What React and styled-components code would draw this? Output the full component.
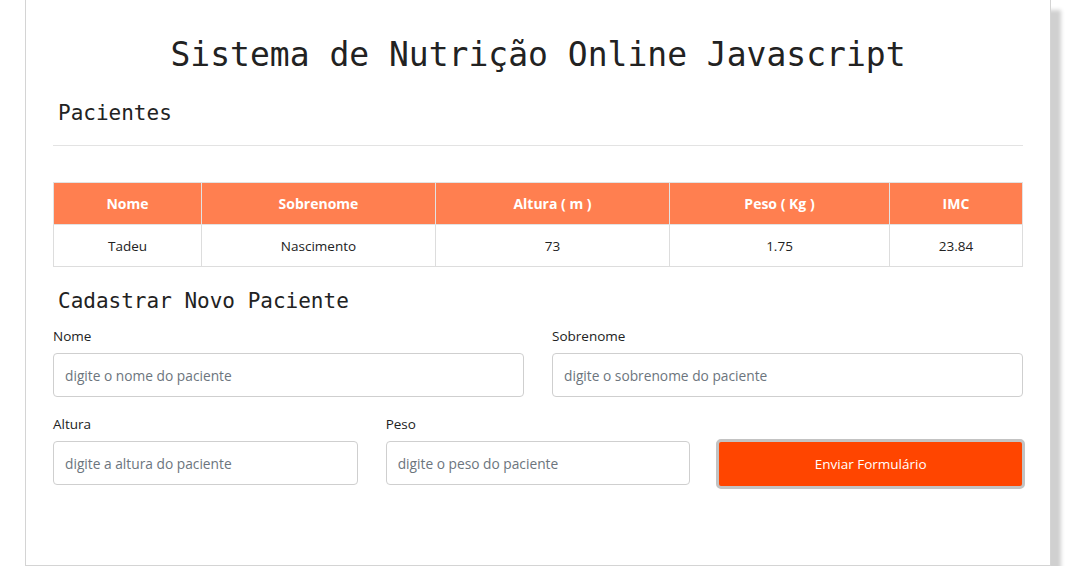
import React from 'react'
import styled, { createGlobalStyle } from 'styled-components'

const GlobalStyle = createGlobalStyle`
  body {
    margin: 0;
    background: #ffffff;
    font-family: "Open Sans", "Noto Sans", sans-serif;
  }
  * { box-sizing: border-box; }
`

const patients = [
  { nome: 'Tadeu', sobrenome: 'Nascimento', altura: '73', peso: '1.75', imc: '23.84' },
]

const columns = [
  { label: 'Nome', width: 148 },
  { label: 'Sobrenome', width: 234 },
  { label: 'Altura ( m )', width: 234 },
  { label: 'Peso ( Kg )', width: 220 },
  { label: 'IMC', width: 133 },
]

const App = () => {
  return (
    <>
      <GlobalStyle />
      <Card>
        <Title>Sistema de Nutrição Online Javascript</Title>
        <SectionTitle>Pacientes</SectionTitle>
        <Divider />
        <Table>
          <colgroup>
            {columns.map((c) => (
              <col key={c.label} width={c.width} />
            ))}
          </colgroup>
          <thead>
            <tr>
              {columns.map((c) => (
                <Th key={c.label}>{c.label}</Th>
              ))}
            </tr>
          </thead>
          <tbody>
            {patients.map((p) => (
              <tr key={p.nome}>
                <Td>{p.nome}</Td>
                <Td>{p.sobrenome}</Td>
                <Td>{p.altura}</Td>
                <Td>{p.peso}</Td>
                <Td>{p.imc}</Td>
              </tr>
            ))}
          </tbody>
        </Table>

        <SectionTitle form>Cadastrar Novo Paciente</SectionTitle>
        <Form onSubmit={(e) => e.preventDefault()}>
          <FormRow cols={2}>
            <Field>
              <Label>Nome</Label>
              <Input type="text" placeholder="digite o nome do paciente" />
            </Field>
            <Field>
              <Label>Sobrenome</Label>
              <Input type="text" placeholder="digite o sobrenome do paciente" />
            </Field>
          </FormRow>
          <FormRow cols={3}>
            <Field>
              <Label>Altura</Label>
              <Input type="text" placeholder="digite a altura do paciente" />
            </Field>
            <Field>
              <Label>Peso</Label>
              <Input type="text" placeholder="digite o peso do paciente" />
            </Field>
            <SubmitButton type="submit">Enviar Formulário</SubmitButton>
          </FormRow>
        </Form>
      </Card>
    </>
  )
}

const Card = styled.div`
  width: 1026px;
  margin-left: 25px;
  padding: 34px 27px 80px;
  background: #ffffff;
  border: 1px solid #d4d4d4;
  border-top: 0;
  box-shadow: 10px 10px 4px #d0d0d0;
`
const Title = styled.h1`
  margin: 0;
  text-align: center;
  font-family: "DejaVu Sans Mono", "Liberation Mono", monospace;
  font-size: 33px;
  font-weight: normal;
  line-height: 42px;
  color: #222222;
`
const SectionTitle = styled.h2`
  margin: ${(p) => (p.form ? '20px 0 0' : '23px 0 0')};
  padding-left: 5px;
  font-family: "DejaVu Sans Mono", "Liberation Mono", monospace;
  font-size: 21px;
  font-weight: normal;
  line-height: 28px;
  color: #222222;
`
const Divider = styled.hr`
  margin: 18px 0 36px;
  border: 0;
  border-top: 1px solid #e3e3e3;
`
const Table = styled.table`
  width: 969px;
  border-collapse: collapse;
  table-layout: fixed;
  font-size: 13.5px;
`
const Th = styled.th`
  height: 42px;
  background: #ff7f50;
  color: #ffffff;
  font-size: 14px;
  font-weight: 700;
  border: 1px solid #e2e2e2;
  text-align: center;
`
const Td = styled.td`
  height: 42px;
  color: #222222;
  border: 1px solid #dddddd;
  text-align: center;
`
const Form = styled.form`
  margin-top: 12px;
  display: flex;
  flex-direction: column;
  gap: 18px;
`
const FormRow = styled.div`
  display: grid;
  grid-template-columns: repeat(${(p) => p.cols}, 1fr);
  column-gap: 28px;
  align-items: end;
`
const Field = styled.div`
  display: flex;
  flex-direction: column;
`
const Label = styled.label`
  font-size: 13.5px;
  line-height: 18px;
  color: #222222;
  margin-bottom: 8px;
`
const Input = styled.input`
  height: 44px;
  padding: 0 11px;
  border: 1px solid #cfcfcf;
  border-radius: 4px;
  font-family: inherit;
  font-size: 13.75px;
  color: #222222;
  outline: none;

  &::placeholder {
    color: #6c757d;
  }
`
const SubmitButton = styled.button`
  height: 50px;
  margin: 0 -2px -4px;
  background: #ff4500;
  color: #ffffff;
  border: 3px solid #c3c3c3;
  border-radius: 5px;
  font-family: inherit;
  font-size: 13.5px;
  cursor: pointer;
`

export default App
